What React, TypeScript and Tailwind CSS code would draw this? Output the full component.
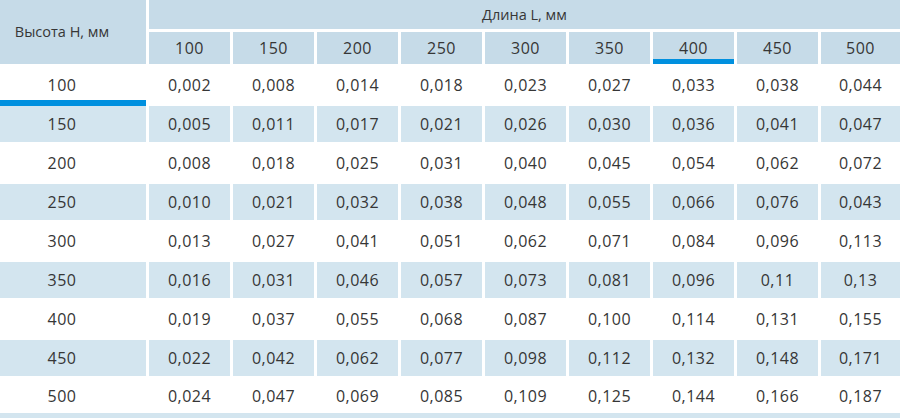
const lengths = [100, 150, 200, 250, 300, 350, 400, 450, 500]

const rows: [number, string[]][] = [
  [100, ['0,002', '0,008', '0,014', '0,018', '0,023', '0,027', '0,033', '0,038', '0,044']],
  [150, ['0,005', '0,011', '0,017', '0,021', '0,026', '0,030', '0,036', '0,041', '0,047']],
  [200, ['0,008', '0,018', '0,025', '0,031', '0,040', '0,045', '0,054', '0,062', '0,072']],
  [250, ['0,010', '0,021', '0,032', '0,038', '0,048', '0,055', '0,066', '0,076', '0,043']],
  [300, ['0,013', '0,027', '0,041', '0,051', '0,062', '0,071', '0,084', '0,096', '0,113']],
  [350, ['0,016', '0,031', '0,046', '0,057', '0,073', '0,081', '0,096', '0,11', '0,13']],
  [400, ['0,019', '0,037', '0,055', '0,068', '0,087', '0,100', '0,114', '0,131', '0,155']],
  [450, ['0,022', '0,042', '0,062', '0,077', '0,098', '0,112', '0,132', '0,148', '0,171']],
  [500, ['0,024', '0,047', '0,069', '0,085', '0,109', '0,125', '0,144', '0,166', '0,187']],
]

export default function App() {
  return (
    <div className="w-[900px] h-[418px] bg-white overflow-hidden font-['Open_Sans',sans-serif] text-[#363636]">
      <div className="grid grid-cols-[146px_repeat(8,81px)_79px] grid-rows-[29px_32px] gap-[3px]">
        {/* шапка */}
        <div className="row-span-2 bg-[#c6dbe8] flex items-center justify-center pr-[22px] text-[14.5px]">
          Высота H, мм
        </div>
        <div className="col-span-9 bg-[#c6dbe8] flex items-center justify-center text-[14.5px]">
          Длина L, мм
        </div>
        {lengths.map(l => (
          <div key={l} className="relative bg-[#c6dbe8] flex items-center justify-center text-[16px] tracking-[0.5px]">
            {l}
            {l === 400 && <span className="absolute left-0 right-0 bottom-0 h-[5px] bg-[#0090df]" />}
          </div>
        ))}

        {/* данные */}
        {rows.map(([h, vals], i) => {
          const bg = i % 2 === 1 ? 'bg-[#d3e5ef]' : 'bg-white'
          const height = i === rows.length - 1 ? 'h-[34px]' : 'h-[36px]'
          const cell = `${bg} ${height} flex items-center justify-center text-[16px] tracking-[0.5px]`
          return [
            <div key={h} className={`${cell} relative pr-[22px]`}>
              {h}
              {h === 100 && <span className="absolute left-0 right-0 bottom-[-3px] h-[6px] bg-[#0090df]" />}
            </div>,
            ...vals.map((v, j) => (
              <div key={`${h}-${j}`} className={cell}>
                {v}
              </div>
            )),
          ]
        })}
      </div>
      <div className="h-[5px] bg-[#d3e5ef]" />
    </div>
  )
}
